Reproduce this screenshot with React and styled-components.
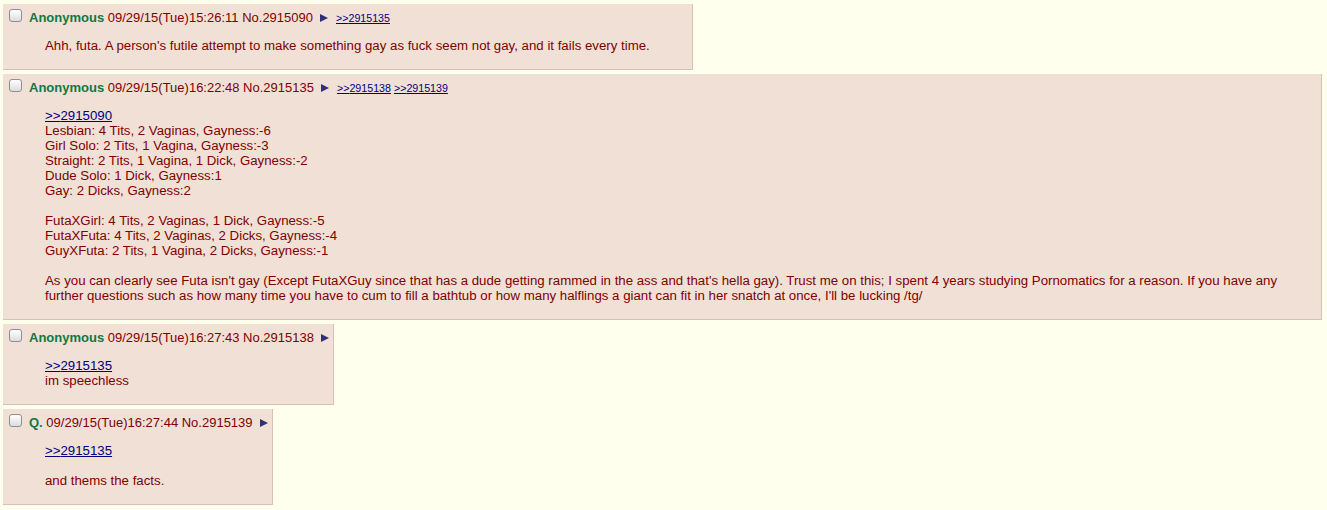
import React from "react";
import styled, { createGlobalStyle } from "styled-components";

const GlobalStyle = createGlobalStyle`
  html, body {
    margin: 0;
    padding: 0;
    background: #ffffee;
  }
  body {
    font-family: "Liberation Sans", Arial, Helvetica, sans-serif;
    font-size: 13px;
    color: #800000;
  }
`;

const Thread = styled.div`
  padding: 0 5px 0 3px;
  display: flex;
  flex-direction: column;
  align-items: flex-start;
`;

const Post = styled.div`
  box-sizing: border-box;
  max-width: 100%;
  margin: 4px 0 0;
  padding: 2px;
  background: #f0e0d6;
  border-right: 1px solid #d9bfb7;
  border-bottom: 1px solid #d9bfb7;
`;

const PostInfo = styled.div`
  box-sizing: border-box;
  display: flex;
  align-items: baseline;
  height: 19px;
  padding-top: 4px;
  font-size: 13px;
  line-height: 15px;
  white-space: nowrap;
`;

const Check = styled.input.attrs({ type: "checkbox" })`
  appearance: none;
  align-self: flex-start;
  box-sizing: border-box;
  width: 13px;
  height: 13px;
  margin: -1px 7px 0 4px;
  border: 1px solid #8f8f8f;
  border-radius: 3px;
  background: linear-gradient(#ffffff, #dcdcdc);
`;

const Name = styled.span`
  color: #117743;
  font-weight: bold;
  margin-right: 3.6px;
`;

const DateTime = styled.span`
  margin-right: 3.6px;
`;

const PostNo = styled.span`
  margin-right: 7px;
`;

const MenuArrow = styled.svg`
  align-self: flex-start;
  width: 8px;
  height: 8px;
  margin: 4px 2px 0 0;
  flex: none;
`;

const Backlinks = styled.span`
  font-size: 10.67px;
  margin-left: 6px;
  display: flex;
  align-items: baseline;
  gap: 3px;
`;

const Link = styled.a`
  color: #000080;
  text-decoration: underline;
  cursor: pointer;
`;

const Body = styled.blockquote`
  margin: 13px 40px 14px;
  font-size: 13.25px;
  line-height: 15px;
`;

const Line = styled.div`
  min-height: 15px;
`;

const Arrow = () => (
  <MenuArrow viewBox="0 0 8 8">
    <path d="M0 0 L8 4 L0 8 Z" fill="#30307a" />
  </MenuArrow>
);

const posts = [
  {
    name: "Anonymous",
    date: "09/29/15(Tue)15:26:11",
    no: "2915090",
    backlinks: ["2915135"],
    body: [
      "Ahh, futa. A person's futile attempt to make something gay as fuck seem not gay, and it fails every time.",
    ],
  },
  {
    name: "Anonymous",
    date: "09/29/15(Tue)16:22:48",
    no: "2915135",
    backlinks: ["2915138", "2915139"],
    body: [
      { quote: "2915090" },
      "Lesbian: 4 Tits, 2 Vaginas, Gayness:-6",
      "Girl Solo: 2 Tits, 1 Vagina, Gayness:-3",
      "Straight: 2 Tits, 1 Vagina, 1 Dick, Gayness:-2",
      "Dude Solo: 1 Dick, Gayness:1",
      "Gay: 2 Dicks, Gayness:2",
      "",
      "FutaXGirl: 4 Tits, 2 Vaginas, 1 Dick, Gayness:-5",
      "FutaXFuta: 4 Tits, 2 Vaginas, 2 Dicks, Gayness:-4",
      "GuyXFuta: 2 Tits, 1 Vagina, 2 Dicks, Gayness:-1",
      "",
      "As you can clearly see Futa isn't gay (Except FutaXGuy since that has a dude getting rammed in the ass and that's hella gay). Trust me on this; I spent 4 years studying Pornomatics for a reason. If you have any further questions such as how many time you have to cum to fill a bathtub or how many halflings a giant can fit in her snatch at once, I'll be lucking /tg/",
    ],
  },
  {
    name: "Anonymous",
    date: "09/29/15(Tue)16:27:43",
    no: "2915138",
    backlinks: [],
    body: [{ quote: "2915135" }, "im speechless"],
  },
  {
    name: "Q.",
    date: "09/29/15(Tue)16:27:44",
    no: "2915139",
    backlinks: [],
    body: [{ quote: "2915135" }, "", "and thems the facts."],
  },
];

export default function App() {
  return (
    <>
      <GlobalStyle />
      <Thread>
        {posts.map((p) => (
          <Post key={p.no}>
            <PostInfo>
              <Check />
              <Name>{p.name}</Name>
              <DateTime>{p.date}</DateTime>
              <PostNo>No.{p.no}</PostNo>
              <Arrow />
              {p.backlinks.length > 0 && (
                <Backlinks>
                  {p.backlinks.map((b) => (
                    <Link key={b}>&gt;&gt;{b}</Link>
                  ))}
                </Backlinks>
              )}
            </PostInfo>
            <Body>
              {p.body.map((l, i) =>
                typeof l === "object" ? (
                  <Line key={i}>
                    <Link>&gt;&gt;{l.quote}</Link>
                  </Line>
                ) : (
                  <Line key={i}>{l}</Line>
                )
              )}
            </Body>
          </Post>
        ))}
      </Thread>
    </>
  );
}
